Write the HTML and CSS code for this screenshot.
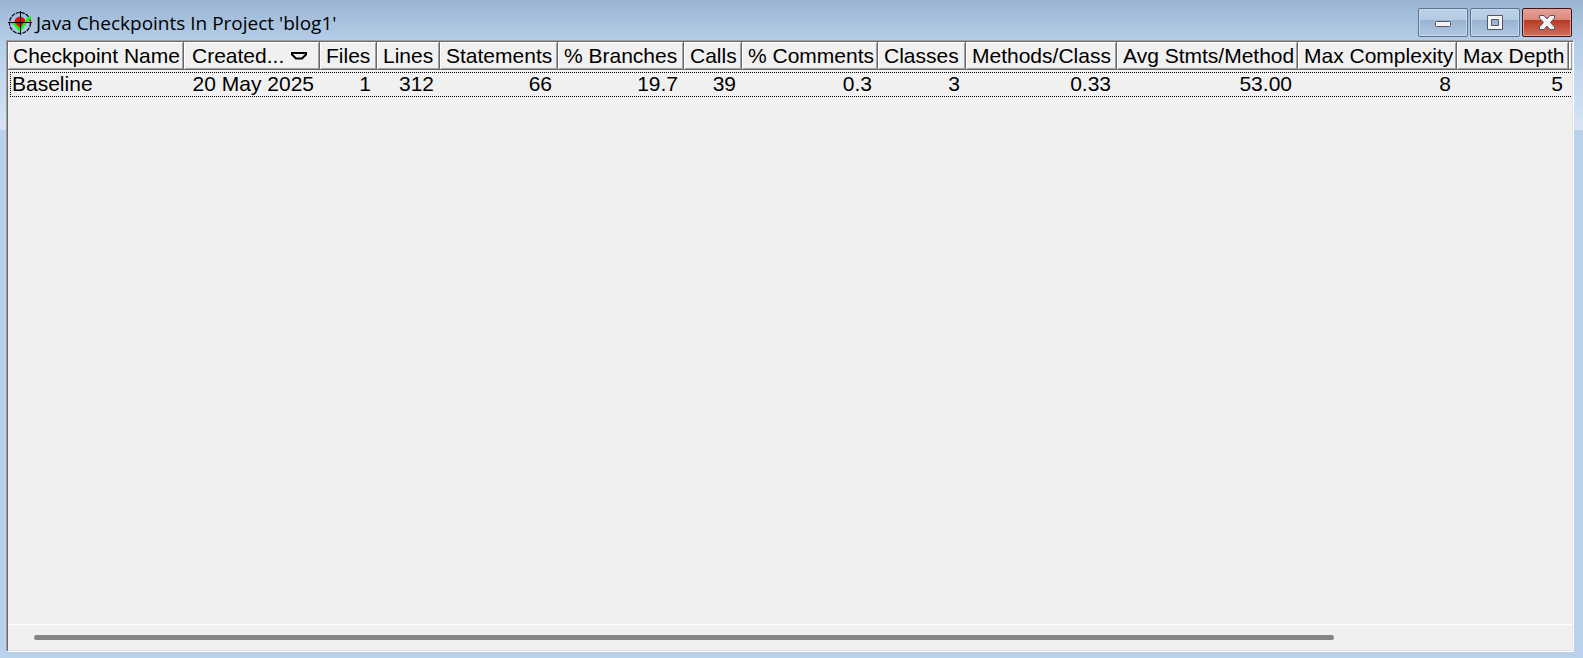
FILE: index.html
```html
<!DOCTYPE html>
<html lang="en">
<head>
<meta charset="UTF-8">
<meta name="viewport" content="width=device-width, initial-scale=1.0">
<title>Java Checkpoints In Project 'blog1'</title>
<link rel="stylesheet" href="styles.css">
</head>
<body>

<div class="window">

  <!-- Title bar -->
  <header class="titlebar">
    <svg class="app-icon" width="24" height="24" viewBox="0 0 24 24" aria-hidden="true">
      <circle cx="12" cy="12" r="10.5" fill="none" stroke="#000" stroke-width="1.2" stroke-dasharray="4 1"/>
      <circle cx="12" cy="11" r="5.5" fill="#f00"/>
      <path d="M4 12l3 0 5 5 8-11 3-1v2l-11 14z" fill="#0f0"/>
      <path d="M12.5 0v24M0 11.5h24" stroke="#000" stroke-width="1"/>
    </svg>
    <h1>Java Checkpoints In Project 'blog1'</h1>
    <div class="controls">
      <button type="button" class="control" aria-label="Minimize">
        <svg width="18" height="18" viewBox="0 0 18 18"><rect x="1.5" y="7.5" width="15" height="5" rx="1" fill="#f4f4f4" stroke="#535666"/></svg>
      </button>
      <button type="button" class="control" aria-label="Maximize">
        <svg width="18" height="18" viewBox="0 0 18 18"><path d="M1.500 1.500h15v14h-15zM5.500 5.500v6h7v-6z" fill="#f4f4f4" fill-rule="evenodd" stroke="#535666"/></svg>
      </button>
      <button type="button" class="control close" aria-label="Close">
        <svg width="18" height="18" viewBox="0 0 18 18"><path d="M1.500 1.500h4.500l3 3.500 3-3.500h4.500v2.500L12.500 8.500l4 4.500v2.500H12L9 12l-3 3.500H1.500V13l4-4.500-4-4.500z" fill="#f4f4f4" stroke="#535666" stroke-linejoin="round"/></svg>
      </button>
    </div>
  </header>

  <!-- Checkpoint list -->
  <main class="pane">
    <div class="list">
      <table>
        <colgroup>
          <col class="c-name">
          <col class="c-created">
          <col class="c-files">
          <col class="c-lines">
          <col class="c-statements">
          <col class="c-branches">
          <col class="c-calls">
          <col class="c-comments">
          <col class="c-classes">
          <col class="c-methods">
          <col class="c-average">
          <col class="c-complexity">
          <col class="c-depth">
          <col>
        </colgroup>
        <thead>
          <tr>
            <th>Checkpoint Name</th>
            <th class="sorted" aria-sort="descending">
              <div class="sort">
                <span>Created...</span>
                <svg width="16" height="8" viewBox="0 0 16 8"><path d="M1 1h14v1.500L11 6.500H5L1 2.500z" fill="none" stroke="#000" stroke-width="2"/></svg>
              </div>
            </th>
            <th>Files</th>
            <th>Lines</th>
            <th>Statements</th>
            <th>% Branches</th>
            <th>Calls</th>
            <th>% Comments</th>
            <th>Classes</th>
            <th>Methods/Class</th>
            <th>Avg Stmts/Method</th>
            <th>Max Complexity</th>
            <th>Max Depth</th>
            <th></th>
          </tr>
        </thead>
        <tbody>
          <tr>
            <td>Baseline</td>
            <td>20 May 2025</td>
            <td>1</td>
            <td>312</td>
            <td>66</td>
            <td>19.7</td>
            <td>39</td>
            <td>0.3</td>
            <td>3</td>
            <td>0.33</td>
            <td>53.00</td>
            <td>8</td>
            <td>5</td>
            <td></td>
          </tr>
        </tbody>
      </table>
    </div>
    <div class="scrollbar">
      <div class="thumb"></div>
    </div>
  </main>

</div>

</body>
</html>
```

FILE: styles.css
```css
/* Reset */
* {
  margin: 0;
  padding: 0;
  box-sizing: border-box;
}

body {
  font-family: "Liberation Sans", Arial, sans-serif;
  font-size: 21px;
  color: #000;
}

/* Window frame */
.window {
  display: flex;
  flex-direction: column;
  height: 100vh;
  padding: 0 9px 6px 6px;
  background: linear-gradient(#9ab5d3 0, #b5cde8 41px, #d8e5f4 130px, #b9d1ea 130px);
}

/* Title bar */
.titlebar {
  display: flex;
  align-items: center;
  flex: none;
  height: 40px;
  padding: 5px 2px 0;
}
.app-icon {
  margin-right: 4px;
}
.titlebar h1 {
  flex: 1;
  font-family: "Segoe UI", "Open Sans", sans-serif;
  font-size: 19px;
  font-weight: 400;
}
.controls {
  display: flex;
  gap: 2px;
}
.control {
  display: flex;
  align-items: center;
  justify-content: center;
  width: 50px;
  height: 29px;
  border: 1px solid #5f7190;
  border-radius: 2px;
  box-shadow: inset 0 0 0 1px #c8daee;
  background: linear-gradient(#bdd1e8 0, #b5cbe4 42%, #98b3d2 42%, #b0c8e2 100%);
}
.close {
  border-color: #43131e;
  box-shadow: inset 0 0 0 1px #e3a197;
  background: linear-gradient(#e5a297 0, #d98779 42%, #b83a23 42%, #d0705c 100%);
}

/* Sunken pane */
.pane {
  display: flex;
  flex-direction: column;
  flex: 1;
  min-height: 0;
  border-style: solid;
  border-width: 1px;
  border-color: #a0a0a0 #fff #fff #a0a0a0;
  box-shadow: inset 1px 1px #696969, inset -1px -1px #e3e3e3;
  background: #f0f0f0;
  padding: 1px;
}
.list {
  flex: 1;
  overflow: hidden;
}

/* Table */
table {
  width: 100%;
  table-layout: fixed;
  border-collapse: separate;
  border-spacing: 0;
}
.c-name { width: 176px; }
.c-created { width: 136px; }
.c-files { width: 57px; }
.c-lines { width: 63px; }
.c-statements { width: 118px; }
.c-branches { width: 126px; }
.c-calls { width: 58px; }
.c-comments { width: 136px; }
.c-classes { width: 88px; }
.c-methods { width: 151px; }
.c-average { width: 181px; }
.c-complexity { width: 159px; }
.c-depth { width: 112px; }

th {
  height: 28px;
  padding: 0 0 0 6px;
  border-right: 1px solid #696969;
  border-bottom: 1px solid #696969;
  box-shadow: inset 1px 1px #fff, inset -1px -1px #a0a0a0;
  font-weight: 400;
  line-height: 26px;
  text-align: left;
  white-space: nowrap;
}
th:first-child {
  padding-left: 5px;
}
th:last-child {
  padding: 0;
  border-right: 0;
}
.sorted {
  padding: 0 12px 0 8px;
}
.sort {
  display: flex;
  align-items: center;
  justify-content: space-between;
}

tbody::before {
  content: "";
  display: block;
  height: 2px;
}

/* Dotted focus rectangle around the row */
tbody tr {
  background:
    repeating-linear-gradient(90deg, #000 0 1px, transparent 1px 2px) 2px 0 / 100% 1px no-repeat,
    repeating-linear-gradient(90deg, #000 0 1px, transparent 1px 2px) 2px 100% / 100% 1px no-repeat,
    repeating-linear-gradient(#000 0 1px, transparent 1px 2px) 2px 0 / 1px 100% no-repeat;
}
td {
  height: 25px;
  padding: 0 6px 2px 0;
  line-height: 23px;
  text-align: right;
  white-space: nowrap;
}
td:first-child {
  padding-left: 4px;
  text-align: left;
}
td:last-child {
  padding: 0;
}

/* Horizontal scrollbar */
.scrollbar {
  flex: none;
  height: 26px;
  padding: 10px 26px;
  border-top: 1px solid #fff;
}
.thumb {
  width: 86%;
  height: 5px;
  border-radius: 3px;
  background: #858585;
}
```
